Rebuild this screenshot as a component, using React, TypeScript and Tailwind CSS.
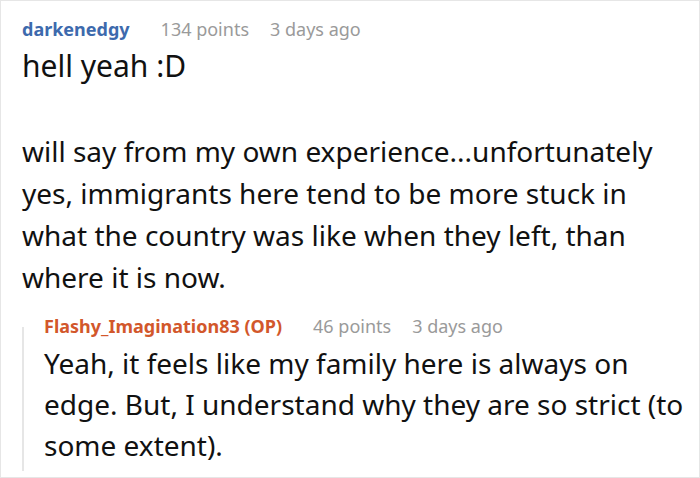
import React from "react";

export default function App() {
  const font = { fontFamily: '"Noto Sans", "Open Sans", sans-serif' };
  return (
    <div
      className="w-[700px] h-[478px] border border-[#e6e6e6] bg-white pl-[21px] pt-[16px] text-[#111] overflow-hidden"
      style={font}
    >
      <div className="flex items-baseline h-[24px] leading-[24px] text-[18px] whitespace-nowrap">
        <span className="font-bold text-[#3d6aad]">darkenedgy</span>
        <span className="ml-[31px] text-[#9a9a9a]">134 points</span>
        <span className="ml-[21px] text-[#9a9a9a]">3 days ago</span>
      </div>
      <p className="mt-[4px] text-[30px] leading-[42px]">hell yeah :D</p>
      <p className="mt-[43px] text-[28px] leading-[42px] whitespace-nowrap">
        will say from my own experience...unfortunately
        <br />
        yes, immigrants here tend to be more stuck in
        <br />
        what the country was like when they left, than
        <br />
        where it is now.
      </p>
      <div className="flex mt-[16px]">
        <div className="w-[2px] mt-[13px] h-[144px] bg-[#e6e6e6]" />
        <div className="pl-[20px]">
          <div className="flex items-baseline h-[24px] leading-[24px] text-[18px] whitespace-nowrap">
            <span className="font-bold text-[#d2572b]">Flashy_Imagination83 (OP)</span>
            <span className="ml-[31px] text-[#9a9a9a]">46 points</span>
            <span className="ml-[21px] text-[#9a9a9a]">3 days ago</span>
          </div>
          <p className="mt-[5px] text-[28px] leading-[41px] whitespace-nowrap">
            Yeah, it feels like my family here is always on
            <br />
            edge. But, I understand why they are so strict (to
            <br />
            some extent).
          </p>
        </div>
      </div>
    </div>
  );
}
